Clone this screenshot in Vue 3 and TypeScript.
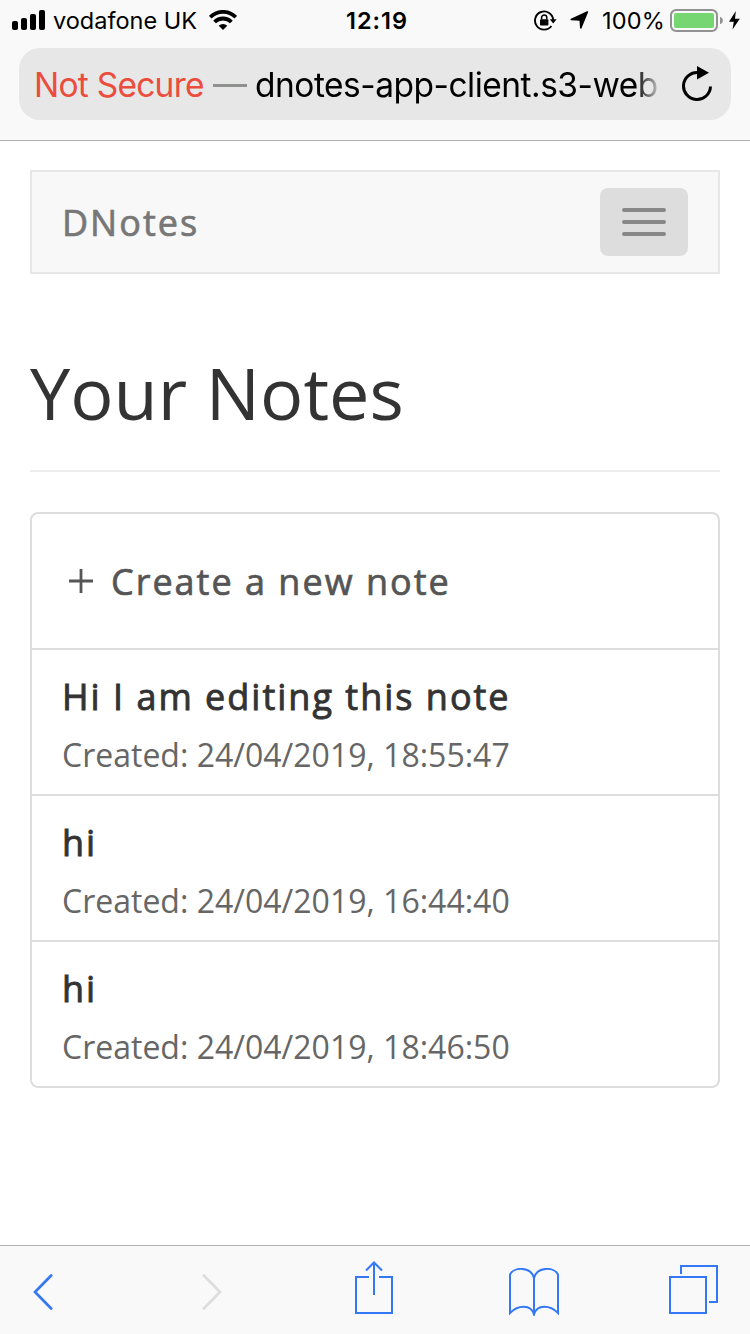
<script setup lang="ts">
interface Note {
  title: string
  created: string
}

const notes: Note[] = [
  { title: 'Hi I am editing this note', created: '24/04/2019, 18:55:47' },
  { title: 'hi', created: '24/04/2019, 16:44:40' },
  { title: 'hi', created: '24/04/2019, 18:46:50' },
]
</script>

<template>
  <div class="screen">
    <header class="chrome">
      <div class="status">
        <div class="status-left">
          <svg class="signal" width="34" height="20" viewBox="0 0 34 20">
            <rect x="0" y="11" width="6" height="9" rx="2" />
            <rect x="9" y="8" width="6" height="12" rx="2" />
            <rect x="18" y="4" width="6" height="16" rx="2" />
            <rect x="27" y="0" width="6" height="20" rx="2" />
          </svg>
          <span class="carrier">vodafone UK</span>
          <svg class="wifi" width="28" height="20" viewBox="0 0 28 20" fill="none" stroke="#000" stroke-width="3.8">
            <path d="M1.2 7.2 A18 18 0 0 1 26.8 7.2" />
            <path d="M5.6 12 A11.8 11.8 0 0 1 22.4 12" />
            <path d="M9.7 15.8 A6.1 6.1 0 0 1 18.3 15.8 L14 20 Z" fill="#000" stroke="none" />
          </svg>
        </div>
        <span class="clock">12:19</span>
        <div class="status-right">
          <svg class="lock" width="23" height="21" viewBox="0 0 23 21" fill="none" stroke="#000">
            <path d="M17.4 16 A9.1 9.1 0 1 1 19.2 10" stroke-width="1.9" />
            <path d="M15.8 9.2 H22.6 L19.2 13.6 Z" fill="#000" stroke="none" />
            <rect x="6" y="9.2" width="8.4" height="6.2" rx="1" fill="#000" stroke="none" />
            <path d="M7.6 9.5 V7.5 A2.6 2.6 0 0 1 12.8 7.5 V9.5" stroke-width="1.5" />
          </svg>
          <svg class="arrow" width="19" height="18" viewBox="0 0 19 18">
            <path d="M17 .3 Q18.5 -.1 18.1 1.2 L11.5 17.2 Q10.4 18.6 10 16.8 L9.5 9.8 L1.1 9.2 Q-.3 8.8 .9 7.8 Z" />
          </svg>
          <span class="percent">100%</span>
          <svg class="battery" width="53" height="24" viewBox="0 0 53 24">
            <rect x="1" y="1" width="46" height="21" rx="5.2" fill="none" stroke="#929292" stroke-width="2" />
            <rect x="4" y="4" width="40" height="15" rx="2" fill="#76d672" />
            <path d="M50 7.8 Q53 9 53 11.5 Q53 14 50 15.2 Z" fill="#929292" />
          </svg>
          <svg class="bolt" width="11" height="19" viewBox="0 0 11 19">
            <path d="M6.8 0 L0 10.7 H4.8 L3.5 18.5 L10.8 7.8 H6 Z" />
          </svg>
        </div>
      </div>
      <div class="address">
        <span class="insecure">Not Secure</span>
        <span class="dash"></span>
        <span class="url">dnotes-app-client.s3-web</span>
        <svg class="reload" width="31" height="36" viewBox="0 0 31 36">
          <path d="M16.5 6.6 A13.5 13.5 0 1 0 28.5 20.5" fill="none" stroke="#000" stroke-width="3" />
          <path d="M15 0 L27 6.8 L15 13.6 Z" />
        </svg>
      </div>
    </header>

    <main class="page">
      <nav class="navbar">
        <span class="brand">DNotes</span>
        <button class="toggle" aria-label="Toggle navigation">
          <i></i><i></i><i></i>
        </button>
      </nav>
      <h1>Your Notes</h1>
      <section class="notes">
        <div class="create">
          <svg width="24" height="24" viewBox="0 0 24 24" stroke="#555" stroke-width="2.8">
            <path d="M0 12 H24 M12 0 V24" />
          </svg>
          <span>Create a new note</span>
        </div>
        <article v-for="(note, i) in notes" :key="i" class="note">
          <h2>{{ note.title }}</h2>
          <p>Created: {{ note.created }}</p>
        </article>
      </section>
    </main>

    <footer class="toolbar">
      <svg class="back" width="20" height="36" viewBox="0 0 20 36">
        <path d="M18.2 1.5 L2 18 L18.2 34.5" stroke-linecap="round" />
      </svg>
      <svg class="forward" width="20" height="36" viewBox="0 0 20 36">
        <path d="M1.8 1.5 L18 18 L1.8 34.5" stroke-linecap="round" />
      </svg>
      <svg class="share" width="38" height="53" viewBox="0 0 38 53">
        <path d="M14 16 H1 V52 H37 V16 H24 M19 34 V1.5 M11 9.5 L19 1.5 L27 9.5" />
      </svg>
      <svg class="book" width="50" height="48" viewBox="0 0 50 48">
        <path d="M25 10 C22 -1.5 5 -1.5 1 6.5 V45 C9 37 22 36 25 46.5 C28 36 41 37 49 45 V6.5 C45 -1.5 28 -1.5 25 10 V46" />
      </svg>
      <svg class="tabs" width="49" height="49" viewBox="0 0 49 49">
        <path d="M1 12 H37 V48 H1 Z M12 9 V1 H48 V37 H40" />
      </svg>
    </footer>
  </div>
</template>

<style>
body {
  margin: 0;
  background: #fff;
}
</style>

<style scoped>
.screen {
  display: flex;
  flex-direction: column;
  width: 750px;
  height: 1334px;
  overflow: hidden;
  background: #fff;
  font-family: 'Open Sans', 'Noto Sans', sans-serif;
  color: #333;
}

svg {
  display: block;
  flex: none;
}

.chrome {
  box-sizing: border-box;
  height: 141px;
  flex: none;
  background: #f9f9f9;
  border-bottom: 1px solid #b0b0b0;
  font-family: Inter, 'Liberation Sans', sans-serif;
  color: #000;
  white-space: nowrap;
}

.status {
  display: grid;
  grid-template-columns: 334px 1fr auto;
  align-items: center;
  height: 40px;
  margin-bottom: 8px;
  padding: 0 10px 0 12px;
}

.status-left,
.status-right {
  display: flex;
  align-items: center;
}

.carrier {
  width: 144px;
  margin-left: 7px;
  font-size: 23.5px;
}

.wifi {
  margin-left: 12px;
}

.clock {
  font-size: 23.5px;
  font-weight: 600;
  letter-spacing: 1px;
}

.arrow {
  margin: 0 0 0 13px;
}

.percent {
  width: 62px;
  margin: 0 6px 0 13px;
  font-size: 23.5px;
  letter-spacing: 0.2px;
}

.battery {
  margin-top: 2px;
}

.bolt {
  margin-left: 6px;
}

.address {
  box-sizing: border-box;
  display: flex;
  align-items: center;
  width: 712px;
  height: 72px;
  margin-left: 19px;
  padding-left: 15px;
  border-radius: 21px;
  background: #e7e7e7;
  font-size: 33.5px;
}

.insecure,
.url {
  padding-top: 1px;
}

.insecure {
  width: 171px;
  color: #eb4d3d;
  letter-spacing: -0.75px;
}

.dash {
  width: 34px;
  height: 3px;
  margin: 3px 8px 0;
  background: #8e918e;
}

.url {
  width: 402px;
  letter-spacing: -0.5px;
  mask-image: linear-gradient(to right, #000 380px, transparent 408px);
}

.reload {
  margin-left: 25px;
}

.page {
  flex: 1;
  padding: 29px 30px 0;
}

.navbar {
  box-sizing: border-box;
  display: flex;
  align-items: center;
  justify-content: space-between;
  height: 104px;
  padding: 0 30px;
  border: 2px solid #e7e7e7;
  background: #f8f8f8;
}

.brand,
.create,
.note h2 {
  font-size: 36px;
  font-weight: 400;
  letter-spacing: 2px;
  -webkit-text-stroke: 0.7px currentColor;
}

.brand {
  color: #777;
}

.toggle {
  display: flex;
  flex-direction: column;
  align-items: center;
  justify-content: center;
  gap: 8px;
  width: 88px;
  height: 68px;
  padding: 0;
  border: 0;
  border-radius: 8px;
  background: #ddd;
}

.toggle i {
  width: 44px;
  height: 4px;
  border-radius: 2px;
  background: #888;
}

h1 {
  box-sizing: border-box;
  height: 198px;
  margin: 0 0 40px;
  padding-top: 78px;
  border-bottom: 2px solid #eee;
  font-size: 72px;
  font-weight: 400;
  line-height: 80px;
}

.notes {
  border: 2px solid #ddd;
  border-radius: 8px;
}

.create {
  display: flex;
  align-items: center;
  height: 134px;
  padding-left: 37px;
  color: #555;
}

.create svg {
  margin-right: 18px;
}

.note {
  box-sizing: border-box;
  height: 146px;
  padding: 27px 30px 0;
  border-top: 2px solid #ddd;
}

.note h2 {
  margin: 0 0 16px;
  line-height: 40px;
  -webkit-text-stroke-width: 0.9px;
}

.note p {
  margin: 0;
  color: #666;
  font-size: 32px;
  line-height: 44px;
}

.toolbar {
  box-sizing: border-box;
  display: flex;
  align-items: flex-start;
  height: 89px;
  flex: none;
  padding-left: 33px;
  border-top: 1px solid #b0b0b0;
  background: #f9f9f9;
}

.toolbar path {
  fill: none;
  stroke: #3478f6;
  stroke-width: 2;
}

.back,
.forward {
  margin-top: 28px;
}

.toolbar .back path,
.toolbar .forward path {
  stroke-width: 2.7px;
}

.forward {
  margin-left: 149px;
}

.toolbar .forward path {
  stroke: #ddd;
}

.share {
  margin: 15px 0 0 133px;
}

.book {
  margin: 22px 0 0 116px;
}

.tabs {
  margin: 19px 0 0 110px;
}
</style>
